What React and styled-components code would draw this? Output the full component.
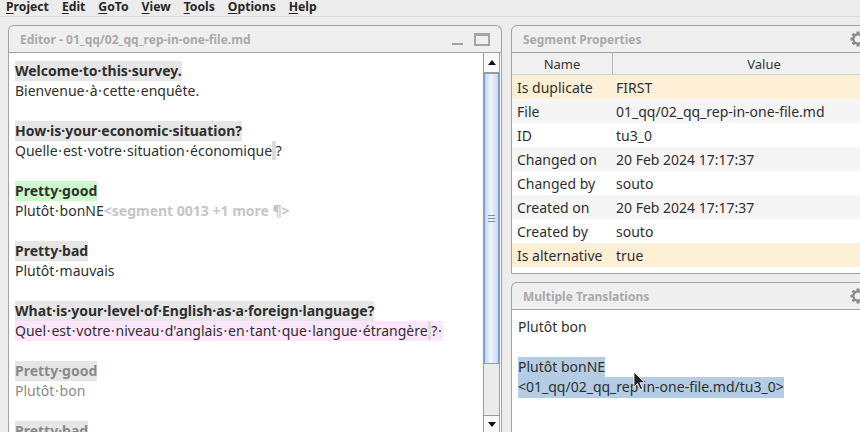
import styled, { createGlobalStyle } from "styled-components";

const GlobalStyle = createGlobalStyle`
  html, body {
    margin: 0;
    padding: 0;
    background: #ececec;
    overflow: hidden;
  }
  body {
    font-family: "Noto Sans", "Open Sans", sans-serif;
    color: #2f2f2f;
  }
`;

const menus = [
  ["P", "roject"],
  ["E", "dit"],
  ["G", "oTo"],
  ["V", "iew"],
  ["T", "ools"],
  ["O", "ptions"],
  ["H", "elp"],
];

// editor lines: kind decides the highlight of the text
const editorLines = [
  { kind: "src", text: "Welcome·to·this·survey." },
  { kind: "tgt", text: "Bienvenue·à·cette·enquête." },
  { kind: "blank" },
  { kind: "src", text: "How·is·your·economic·situation?" },
  { kind: "tgt", text: "Quelle·est·votre·situation·économique", nbsp: "?" },
  { kind: "blank" },
  { kind: "active", text: "Pretty·good" },
  { kind: "tgt", text: "Plutôt·bonNE", tag: "<segment 0013 +1 more ¶>" },
  { kind: "blank" },
  { kind: "src", text: "Pretty·bad" },
  { kind: "tgt", text: "Plutôt·mauvais" },
  { kind: "blank" },
  { kind: "src", text: "What·is·your·level·of·English·as·a·foreign·language?" },
  { kind: "pink", text: "Quel·est·votre·niveau·d'anglais·en·tant·que·langue·étrangère", nbsp: "?·" },
  { kind: "blank" },
  { kind: "fadedSrc", text: "Pretty·good" },
  { kind: "faded", text: "Plutôt·bon" },
  { kind: "blank" },
  { kind: "fadedSrc", text: "Pretty·bad" },
];

const props = [
  ["Is duplicate", "FIRST", true],
  ["File", "01_qq/02_qq_rep-in-one-file.md"],
  ["ID", "tu3_0"],
  ["Changed on", "20 Feb 2024 17:17:37"],
  ["Changed by", "souto"],
  ["Created on", "20 Feb 2024 17:17:37"],
  ["Created by", "souto"],
  ["Is alternative", "true", true],
];

// visible whitespace dots in the translation text are a little wider
const withDots = (text) =>
  text.split(/(·)/).map((part, i) => (part === "·" ? <Dot key={i}>·</Dot> : part));

const Gear = () => (
  <GearBox>
    <svg width="16" height="16" viewBox="0 0 16 16">
      <g fill="#8a8a8a">
        {[0, 45, 90, 135, 180, 225, 270, 315].map((a) => (
          <rect key={a} x="6.5" y="0.5" width="3" height="3" transform={`rotate(${a} 8 8)`} />
        ))}
      </g>
      <circle cx="8" cy="8" r="4.6" fill="none" stroke="#8a8a8a" strokeWidth="2.2" />
    </svg>
  </GearBox>
);

const Cursor = () => (
  <svg width="14" height="20" viewBox="0 0 14 20">
    <path d="M1 1 L1 16 L4.6 12.6 L7.4 18.6 L9.6 17.6 L6.9 11.7 L11.8 11.7 Z" fill="#1f232b" stroke="#ffffff" strokeWidth="0.8" />
  </svg>
);

const EditorLine = ({ line }) => {
  if (line.kind === "blank") return <Line />;
  if (line.kind === "src" || line.kind === "active" || line.kind === "fadedSrc") {
    return (
      <Line>
        <Source $kind={line.kind}>{line.text}</Source>
      </Line>
    );
  }
  return (
    <Line>
      <Target $kind={line.kind}>
        {withDots(line.text)}
        {line.nbsp && (
          <>
            <Nbsp>{"\u00a0"}</Nbsp>
            {withDots(line.nbsp)}
          </>
        )}
      </Target>
      {line.tag && <Tag>{line.tag}</Tag>}
    </Line>
  );
};

export default function App() {
  return (
    <Page>
      <GlobalStyle />
      <MenuBar>
        {menus.map(([first, rest]) => (
          <MenuItem key={first + rest}>
            <u>{first}</u>
            {rest}
          </MenuItem>
        ))}
      </MenuBar>

      <Main>
        <EditorPanel>
          <TitleBar>
            <Title>Editor - 01_qq/02_qq_rep-in-one-file.md</Title>
            <WinButtons>
              <MinIcon />
              <MaxIcon />
            </WinButtons>
          </TitleBar>
          <EditorBody>
            <EditorText>
              {editorLines.map((line, i) => (
                <EditorLine key={i} line={line} />
              ))}
            </EditorText>
            <ScrollBar>
              <ArrowButton>
                <svg width="8" height="5" viewBox="0 0 8 5">
                  <path d="M0 5 L4 0 L8 5 Z" fill="#111" />
                </svg>
              </ArrowButton>
              <Thumb>
                <Grip />
              </Thumb>
              <Track />
              <ArrowButton $down>
                <svg width="8" height="5" viewBox="0 0 8 5">
                  <path d="M0 0 L4 5 L8 0 Z" fill="#111" />
                </svg>
              </ArrowButton>
            </ScrollBar>
          </EditorBody>
        </EditorPanel>

        <SideColumn>
          <PropsPanel>
            <TitleBar>
              <Title>Segment Properties</Title>
              <Gear />
            </TitleBar>
            <TableArea>
              <HeaderRow>
                <HeadCell $name>Name</HeadCell>
                <HeadCell>Value</HeadCell>
              </HeaderRow>
              {props.map(([name, value, flagged], i) => (
                <Row key={name} $tone={flagged ? "flag" : i % 2 ? "alt" : "plain"}>
                  <NameCell>{name}</NameCell>
                  <ValueCell>{value}</ValueCell>
                </Row>
              ))}
            </TableArea>
          </PropsPanel>

          <TransPanel>
            <TitleBar>
              <Title>Multiple Translations</Title>
              <Gear />
            </TitleBar>
            <TransBody>
              <TransLine>Plutôt bon</TransLine>
              <TransLine />
              <TransLine>
                <Selected>Plutôt bonNE</Selected>
              </TransLine>
              <TransLine>
                <Selected>&lt;01_qq/02_qq_rep-in-one-file.md/tu3_0&gt;</Selected>
              </TransLine>
            </TransBody>
          </TransPanel>
        </SideColumn>
      </Main>

      <MouseCursor>
        <Cursor />
      </MouseCursor>
    </Page>
  );
}

const Page = styled.div`
  position: relative;
  width: 860px;
  height: 432px;
  overflow: hidden;
  display: flex;
  flex-direction: column;
`;

const MenuBar = styled.div`
  height: 16px;
  display: flex;
  align-items: flex-start;
  gap: 13px;
  padding-left: 6px;
  border-bottom: 1px solid #d9d9d9;
  flex-shrink: 0;
`;

const MenuItem = styled.span`
  font-size: 12.2px;
  font-weight: 700;
  line-height: 14px;
  color: #262626;
  white-space: nowrap;

  u {
    text-underline-offset: 2px;
  }
`;

const Main = styled.div`
  flex: 1;
  display: flex;
  gap: 9px;
  padding: 8px 0 0 8px;
  min-height: 0;
`;

const Panel = styled.div`
  display: flex;
  flex-direction: column;
  border: 1px solid #a3a3a3;
  border-radius: 6px 6px 0 0;
  overflow: hidden;
  background: #efefef;
  flex-shrink: 0;
`;

const EditorPanel = styled(Panel)`
  width: 492px;
  border-bottom: none;
`;

const TitleBar = styled.div`
  height: 26px;
  border-bottom: 1px solid #a3a3a3;
  display: flex;
  align-items: center;
  justify-content: space-between;
  padding: 0 0 0 11px;
  flex-shrink: 0;
`;

const Title = styled.span`
  font-size: 12px;
  font-weight: 700;
  color: #a9a9a9;
  white-space: nowrap;
`;

const GearBox = styled.span`
  display: flex;
  margin-right: 6px;
`;

const WinButtons = styled.div`
  display: flex;
  align-items: center;
  gap: 11px;
  padding-right: 11px;
`;

const MinIcon = styled.span`
  width: 11px;
  height: 2px;
  margin-top: 10px;
  background: #a5a5a5;
`;

const MaxIcon = styled.span`
  width: 12px;
  height: 8px;
  border: 2px solid #a5a5a5;
  border-top-width: 3px;
`;

const EditorBody = styled.div`
  flex: 1;
  display: flex;
  background: #fff;
  min-height: 0;
`;

const EditorText = styled.div`
  flex: 1;
  padding: 8px 0 0 6px;
  overflow: hidden;
`;

const Line = styled.div`
  height: 20px;
  line-height: 20px;
  font-size: 14px;
  white-space: pre;
`;

const Source = styled.span`
  display: inline-block;
  font-weight: 700;
  background: ${({ $kind }) => ($kind === "active" ? "#ccfacc" : "#e6e6e6")};
  color: ${({ $kind }) => ($kind === "fadedSrc" ? "#8a8a8a" : "#2f2f2f")};
`;

const Target = styled.span`
  display: inline-block;
  background: ${({ $kind }) => ($kind === "pink" ? "#fde6fd" : "transparent")};
  color: ${({ $kind }) => ($kind === "faded" ? "#8a8a8a" : "#2f2f2f")};
`;

const Dot = styled.span`
  padding: 0 0.75px;
`;

const Nbsp = styled.span`
  background: #dcdcdc;
`;

const Tag = styled.span`
  font-size: 14px;
  font-weight: 700;
  color: #c6c6c6;
`;

const ScrollBar = styled.div`
  width: 15px;
  margin-right: 1px;
  display: flex;
  flex-direction: column;
  border-left: 1px solid #9a9a9a;
  border-right: 1px solid #9a9a9a;
  background: #ececec;
`;

const ArrowButton = styled.div`
  height: ${({ $down }) => ($down ? "16px" : "19px")};
  display: flex;
  align-items: center;
  justify-content: center;
  background: #f8f8f8;
  border-top: ${({ $down }) => ($down ? "1px solid #9a9a9a" : "none")};
  border-bottom: ${({ $down }) => ($down ? "none" : "1px solid #9a9a9a")};
  flex-shrink: 0;
`;

const Thumb = styled.div`
  height: 291px;
  box-sizing: border-box;
  border: 1px solid #7d9fd6;
  background: linear-gradient(to right, #c3d6ee, #eef4fb 45%, #c8daf0);
  display: flex;
  align-items: center;
  justify-content: center;
  flex-shrink: 0;
`;

const Grip = styled.span`
  width: 7px;
  height: 5px;
  border-top: 1px solid #6f8fc4;
  border-bottom: 1px solid #6f8fc4;
  position: relative;

  &::after {
    content: "";
    position: absolute;
    left: 0;
    right: 0;
    top: 2px;
    border-top: 1px solid #6f8fc4;
  }
`;

const Track = styled.div`
  flex: 1;
  background: #ebebeb;
`;

const SideColumn = styled.div`
  display: flex;
  flex-direction: column;
  gap: 8px;
  width: 362px;
  flex-shrink: 0;
`;

const PropsPanel = styled(Panel)`
  height: 247px;
  width: 360px;
`;

const TableArea = styled.div`
  flex: 1;
  background: #fff;
  overflow: hidden;
`;

const HeaderRow = styled.div`
  height: 21px;
  display: flex;
  background: #f0f0f0;
  border-bottom: 1px solid #d2d2d2;
`;

const HeadCell = styled.div`
  width: ${({ $name }) => ($name ? "100px" : "302px")};
  flex-shrink: 0;
  display: flex;
  align-items: center;
  justify-content: center;
  font-size: 13px;
  color: #333;
  border-right: ${({ $name }) => ($name ? "1px solid #aab7c6" : "none")};
`;

const toneColor = {
  flag: "#fdefd6",
  alt: "#f5f5f5",
  plain: "#ffffff",
};

const Row = styled.div`
  height: 24px;
  display: flex;
  align-items: center;
  font-size: 14px;
  white-space: nowrap;
  background: ${({ $tone }) => toneColor[$tone]};
`;

const NameCell = styled.div`
  width: 97px;
  padding-left: 5px;
  flex-shrink: 0;
`;

const ValueCell = styled.div`
  padding-left: 2px;
`;

const TransPanel = styled(Panel)`
  flex: 1;
  width: 360px;
  border-bottom: none;
`;

const TransBody = styled.div`
  flex: 1;
  background: #fff;
  padding: 7px 6px 0;
`;

const TransLine = styled.div`
  height: 20px;
  line-height: 20px;
  font-size: 14px;
  white-space: pre;
`;

const Selected = styled.span`
  display: inline-block;
  height: 21px;
  background: #b5cce5;
`;

const MouseCursor = styled.div`
  position: absolute;
  left: 633px;
  top: 371px;
  line-height: 0;
`;
